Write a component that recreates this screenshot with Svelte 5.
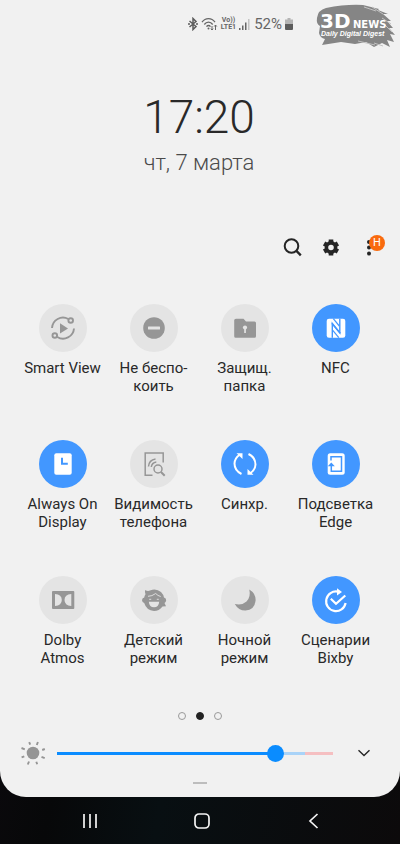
<script>
  let time = '17:20';
  let date = 'чт, 7 марта';
  let battery = 52;

  let brightness = $state(81);
  let page = $state(1);

  let tiles = $state([
    { icon: 'smartview', label: 'Smart View', on: false },
    { icon: 'dnd', label: 'Не беспо-\nкоить', on: false },
    { icon: 'folder', label: 'Защищ.\nпапка', on: false },
    { icon: 'nfc', label: 'NFC', on: true },
    { icon: 'aod', label: 'Always On\nDisplay', on: true },
    { icon: 'visibility', label: 'Видимость\nтелефона', on: false },
    { icon: 'sync', label: 'Синхр.', on: true },
    { icon: 'edge', label: 'Подсветка\nEdge', on: true },
    { icon: 'dolby', label: 'Dolby\nAtmos', on: false },
    { icon: 'kids', label: 'Детский\nрежим', on: false },
    { icon: 'night', label: 'Ночной\nрежим', on: false },
    { icon: 'bixby', label: 'Сценарии\nBixby', on: true }
  ]);
</script>

<main class="screen">
  <section class="panel">
    <header class="status">
      <svg width="10" height="14" viewBox="0 0 10 14" fill="none" stroke="#5c5c5c" stroke-width="1.5">
        <path d="M1.500 4l6.500 5.500L5 12.500v-11L8 4.500 1.500 10" />
        <path d="M0 7h2M8 7h2" />
      </svg>
      <svg width="17" height="14" viewBox="0 0 17 14" fill="none" stroke="#666" stroke-width="1.3">
        <path d="M1 5.200C4.400 .5 10.600 .5 14 5.200M3.300 7.500c2.300-3.100 6.100-3.100 8.400 0M5.500 9.600c1.200-1.500 2.800-1.500 4 0" />
        <circle cx="7.500" cy="11.500" r="1" fill="#666" stroke="none" />
        <path d="M11 9v4M9.800 11.700L11 13l1.200-1.300M14.500 13V8M13.200 9.500L14.500 8l1.300 1.500" stroke-width="1" />
      </svg>
      <span class="volte"><span>Vo))</span><span>LTE1</span></span>
      <svg width="11" height="11" viewBox="0 0 11 11" fill="#666">
        <path d="M0 9h1.500v2H0zM3 6.500h1.500V11H3zM6 3.500h1.500V11H6z" />
        <path d="M9 0h1.500v11H9z" fill="#c4c4c4" />
      </svg>
      <span class="percent">{battery}%</span>
      <svg width="8" height="12" viewBox="0 0 8 12">
        <path d="M2.500 0h3v1.500H8V7H0V1.500h2.500z" fill="#b5b5b5" />
        <path d="M0 6h8v5q0 1-1 1H1q-1 0-1-1z" fill="#5c5c5c" />
      </svg>
      <svg class="logo" width="80" height="46" viewBox="0 0 80 46">
        <path
          d="M1 14Q2 6 10 4Q30 0 47 1L63 5L62 6L72 10L67 10L75 17L71 17L77 24L73 24L79 31L74 30L78 38L71 36L74 43L66 39L58 43L50 38L39 40L25 38L6 41L9 35Q4 34 3 29L4 22Q0 20 1 14Z"
          fill="#858585"
        />
        <path d="M48 3l12 4M56 3l11 7M66 14l9 6M68 20l8 8M58 39l9 3M42 37l17 4" stroke="#c2c2c2" fill="none" />
        <text x="4" y="24" class="logo-big">3D</text>
        <text x="37" y="24" class="logo-mid">NEWS</text>
        <text x="5" y="32" class="logo-small">Daily Digital Digest</text>
      </svg>
    </header>

    <div class="clock">
      <time class="time">{time}</time>
      <div class="date">{date}</div>
    </div>

    <div class="toolbar">
      <button aria-label="Поиск">
        <svg width="24" height="24" viewBox="0 0 24 24" fill="none" stroke="#252525" stroke-width="2">
          <circle cx="10.500" cy="11" r="6.800" />
          <path d="M15.400 15.900l4.400 4.400" stroke-width="2.400" />
        </svg>
      </button>
      <button aria-label="Настройки">
        <svg width="24" height="24" viewBox="0 0 24 24" fill="none" stroke="#252525">
          <circle cx="12" cy="12.500" r="4.600" stroke-width="3.600" />
          <path
            d="M12 4.500v2.500M12 18v2.500M5.100 8.500l2.200 1.250M16.700 15.250l2.200 1.250M5.100 16.500l2.200-1.250M16.700 9.750l2.200-1.250"
            stroke-width="4.600"
          />
        </svg>
      </button>
      <button class="more" aria-label="Ещё">
        <svg width="24" height="24" viewBox="0 0 24 24" fill="#252525">
          <circle cx="12" cy="7" r="2" />
          <circle cx="12" cy="12.500" r="2" />
          <circle cx="12" cy="18.500" r="2" />
        </svg>
        <span class="badge">Н</span>
      </button>
    </div>

    <div class="tiles">
      {#each tiles as tile}
        <button class="tile" class:on={tile.on} aria-pressed={tile.on} onclick={() => (tile.on = !tile.on)}>
          <svg class="tile-icon" viewBox="0 0 48 48" fill="none">
            {#if tile.icon === 'smartview'}
              <path d="M21 19.300v10.200l8-5.100z" class="fill" />
              <g class="line" stroke-width="1.900">
                <path d="M13 24A11 11 0 0 1 29.300 15" />
                <circle cx="31.700" cy="16.500" r="2.300" />
                <path d="M35 24.500A11 11 0 0 1 18.300 33" />
                <circle cx="15.800" cy="31.500" r="2.300" />
              </g>
            {:else if tile.icon === 'dnd'}
              <circle cx="24" cy="24" r="10.800" class="fill" />
              <rect x="18" y="22.500" width="12" height="3" rx=".5" class="cut" />
            {:else if tile.icon === 'folder'}
              <path d="M15 14.700h7.500l2.500 2.800h8.500q1.500 0 1.500 1.500v13.200q0 1.500-1.500 1.500H14.700q-1.500 0-1.500-1.500V16.200q0-1.500 1.800-1.500z" class="fill" />
              <circle cx="24" cy="23.500" r="2.100" class="cut" />
              <path d="M23.200 24h1.700v5h-1.700z" class="cut" />
            {:else if tile.icon === 'nfc'}
              <rect x="14.700" y="14.700" width="18.600" height="19" rx="2.300" class="fill" />
              <path d="M20.300 33.700V19.500l8 9.700" class="cut-line" stroke-width="1.400" />
              <path d="M27.800 14.700v14.200l-8-9.700" class="cut-line" stroke-width="1.400" />
              <path d="M21.300 14.700l6 7.300" class="cut-line" stroke-width="1.200" />
              <path d="M26.800 33.700l-6-7.300" class="cut-line" stroke-width="1.200" />
            {:else if tile.icon === 'aod'}
              <rect x="15.300" y="13.300" width="17.400" height="21.400" rx="2" class="fill" />
              <path d="M23 17.800v5.900h5.800" class="cut-line" stroke-width="2" />
            {:else if tile.icon === 'visibility'}
              <g class="line" stroke-width="1.500">
                <path d="M33.200 22.500V13H15.200v22.300h7.300" />
                <path d="M18.500 26.500q.5-6.500 7-7.500M21.300 27q.5-4.300 5-5" />
                <circle cx="28" cy="29" r="4" />
                <path d="M31 32l3.700 3.700" stroke-width="2" />
              </g>
            {:else if tile.icon === 'sync'}
              <g class="line" stroke-width="2">
                <path d="M20.500 34Q13.500 30.500 13.500 23.500Q13.700 18 19 14.500" />
                <path d="M27.500 14Q34.500 17.500 34.500 24.500Q34.300 30 29 33.500" />
              </g>
              <path d="M15.500 13.300h6v5.700zM32.500 34.700h-6V29z" class="fill" />
            {:else if tile.icon === 'edge'}
              <rect x="15.700" y="13.300" width="17" height="21.400" rx="2.500" class="fill" />
              <path d="M19 20.500v-3.700h10.500v14.400H19.300v-6.500" class="cut-line" stroke-width="1.500" />
              <path d="M15.800 26.300l3.500-3.700 3.500 3.700z" class="cut" />
            {:else if tile.icon === 'dolby'}
              <rect x="13" y="15" width="22.300" height="18" rx="1" class="fill" />
              <path d="M16 18q6.800.5 6.800 6T16 30zM32.300 18q-6.800.5-6.800 6t6.800 6z" class="cut" />
            {:else if tile.icon === 'kids'}
              <path d="M15.200 14q2.500 1.500 4.800.5Q26 11.800 31 16q2.500 2.500 3 5.500 2.300.5 2.200 2.700-.3 2.200-1.700 2.800l1.500 3.200-3.500.3Q29 35 24 35q-7.500-.5-9.800-8-2-.7-2.200-2.800 0-2 2.200-2.700.3-1.800 1.300-3.200-1-2-.3-4.300z" class="fill" />
              <path d="M18 20.300q4 0 7.700-2.800 2 2.300 5 3" class="cut-line" stroke-width=".9" />
              <path d="M18.800 25.700h10.400q-.5 5.600-5.200 5.600t-5.200-5.600z" class="cut" />
              <path d="M19.200 23.300h2M26.800 23.300h2" class="cut-line" stroke-width=".9" />
            {:else if tile.icon === 'night'}
              <path d="M28.300 13.500Q35 17.500 34.600 24.500 33.500 34 24.500 34.600 17.500 34.700 13.800 28 21 29.700 25.500 25.500 30 21 28.300 13.500z" class="fill" />
            {:else if tile.icon === 'bixby'}
              <g class="line" stroke-width="2.200">
                <path d="M26 15.700A9.800 9.800 0 1 0 33.600 27" />
                <path d="M18.800 22.800l5.200 5 9.300-8.300" />
              </g>
              <path d="M25 12.300l5 3.700-5 3.500z" class="fill" />
            {/if}
          </svg>
          <span class="label">{tile.label}</span>
        </button>
      {/each}
    </div>

    <div class="dots">
      {#each [0, 1, 2] as i}
        <button class="dot" class:active={page === i} aria-label="Страница {i + 1}" onclick={() => (page = i)}></button>
      {/each}
    </div>

    <div class="brightness">
      <svg width="26" height="26" viewBox="0 0 26 26">
        <circle cx="13" cy="13" r="6.300" fill="#959595" />
        <path
          d="M9.200 2.200l1 2.400M17.900 2l-1.100 3M22.200 10l2.600-1M21.500 16.800l3.200 1.300M16.300 21.700l.9 2.500M9 21.500l-1.200 3M4.300 16.300l-2.700 1M4.800 9.300L1.500 8"
          stroke="#959595"
          stroke-width="1.900"
        />
      </svg>
      <input type="range" min="0" max="100" aria-label="Яркость" bind:value={brightness} style="--fill: {brightness}%" />
      <button class="expand" aria-label="Развернуть">
        <svg width="14" height="8" viewBox="0 0 14 8" fill="none" stroke="#252525" stroke-width="1.400">
          <path d="M1.500 1.300L7 6.500l5.500-5.200" />
        </svg>
      </button>
    </div>

    <div class="handle"></div>
  </section>

  <nav class="navbar">
    <button aria-label="Недавние">
      <svg width="16" height="16" viewBox="0 0 16 16" stroke="#f4f4f4" stroke-width="1.700">
        <path d="M2 1v14M8 1v14M14 1v14" />
      </svg>
    </button>
    <button aria-label="Главный экран">
      <svg width="16" height="16" viewBox="0 0 16 16" fill="none" stroke="#f4f4f4" stroke-width="1.700">
        <rect x="1" y="1" width="14" height="14" rx="4" />
      </svg>
    </button>
    <button aria-label="Назад">
      <svg width="16" height="16" viewBox="0 0 16 16" fill="none" stroke="#f4f4f4" stroke-width="1.700">
        <path d="M11.500 1L4 8l7.500 7" />
      </svg>
    </button>
  </nav>
</main>

<style>
  :global(body) {
    background: #0a0a0d;
  }

  .screen {
    min-height: 100vh;
    font-family: Roboto, 'Noto Sans', sans-serif;
    color: #292929;
    background: linear-gradient(100deg, #110b12, #070809 35%, #080f12 55%, #0c0a0b);
  }

  button {
    padding: 0;
    border: 0;
    background: none;
    font: inherit;
    color: inherit;
    cursor: pointer;
  }

  svg {
    display: block;
    flex: none;
  }

  .panel {
    background: #f1f1f1;
    border-radius: 0 0 26px 26px;
    padding-bottom: 13px;
  }

  .status {
    display: flex;
    align-items: center;
    justify-content: flex-end;
    gap: 3px;
    height: 48px;
    padding-right: 4px;
    color: #666;
  }

  .volte {
    display: flex;
    flex-direction: column;
    align-items: center;
    font-size: 7px;
    line-height: 7px;
    font-weight: 700;
  }

  .percent {
    margin-left: 1px;
    font-size: 15px;
    line-height: 18px;
  }

  .logo {
    margin-top: 6px;
    margin-left: 20px;
  }

  .logo text {
    fill: #fff;
    font-family: 'DejaVu Sans', sans-serif;
    font-weight: 700;
  }

  .logo .logo-big {
    font-size: 20px;
  }

  .logo .logo-mid {
    font-size: 10px;
  }

  .logo .logo-small {
    font-family: 'Liberation Sans', sans-serif;
    font-size: 7px;
    font-style: italic;
  }

  .clock {
    padding-top: 41px;
    padding-right: 2px;
    text-align: center;
    font-weight: 300;
  }

  .time {
    display: block;
    font-size: 46px;
    line-height: 56px;
  }

  .date {
    margin-top: 6px;
    font-size: 22px;
    line-height: 24px;
    color: #4a4a4a;
  }

  .toolbar {
    display: flex;
    justify-content: flex-end;
    gap: 14px;
    padding: 60px 19px 0 0;
  }

  .more {
    position: relative;
  }

  .badge {
    position: absolute;
    top: 0;
    right: -4px;
    width: 16px;
    height: 16px;
    border-radius: 50%;
    background: #f96a0e;
    color: #fff;
    font-size: 11px;
    line-height: 16px;
  }

  .tiles {
    display: grid;
    grid-template-columns: repeat(4, 1fr);
    gap: 45px 0;
    padding: 45px 19px 0 17px;
  }

  .tile {
    display: flex;
    flex-direction: column;
    align-items: center;
    gap: 7px;
    --bg: #e4e4e4;
    --fg: #969696;
  }

  .tile.on {
    --bg: #4297ff;
    --fg: #fff;
  }

  .tile-icon {
    width: 48px;
    height: 48px;
    border-radius: 50%;
    background: var(--bg);
  }

  .fill {
    fill: var(--fg);
  }

  .cut {
    fill: var(--bg);
  }

  .line {
    stroke: var(--fg);
  }

  .cut-line {
    stroke: var(--bg);
  }

  .label {
    min-height: 36px;
    font-size: 15px;
    line-height: 18px;
    text-align: center;
    white-space: pre;
  }

  .dots {
    display: flex;
    justify-content: center;
    gap: 10px;
    padding-top: 45px;
  }

  .dot {
    width: 8px;
    height: 8px;
    border: 1px solid #9a9a9a;
    border-radius: 50%;
  }

  .dot.active {
    border-color: #222;
    background: #222;
  }

  .brightness {
    display: flex;
    align-items: center;
    padding: 20px 22px 0 20px;
  }

  input[type='range'] {
    flex: 1;
    min-width: 0;
    height: 18px;
    margin: 0 17px 0 11px;
    appearance: none;
    background: linear-gradient(to right, #0a8cff var(--fill), #a9d3f8 var(--fill), #a9d3f8 90%, #f5bfc1 90%) center / 100% 3px no-repeat;
  }

  input[type='range']::-webkit-slider-thumb {
    appearance: none;
    width: 17px;
    height: 17px;
    border-radius: 50%;
    background: #0a8cff;
  }

  .expand {
    display: grid;
    place-items: center;
    width: 28px;
    height: 24px;
  }

  .handle {
    width: 14px;
    height: 2px;
    margin: 16px auto 0;
    background: #bdbdbd;
  }

  .navbar {
    display: grid;
    grid-template-columns: repeat(3, 1fr);
    padding: 0 30px 0 34px;
  }

  .navbar button {
    display: grid;
    place-items: center;
    height: 47px;
  }
</style>
